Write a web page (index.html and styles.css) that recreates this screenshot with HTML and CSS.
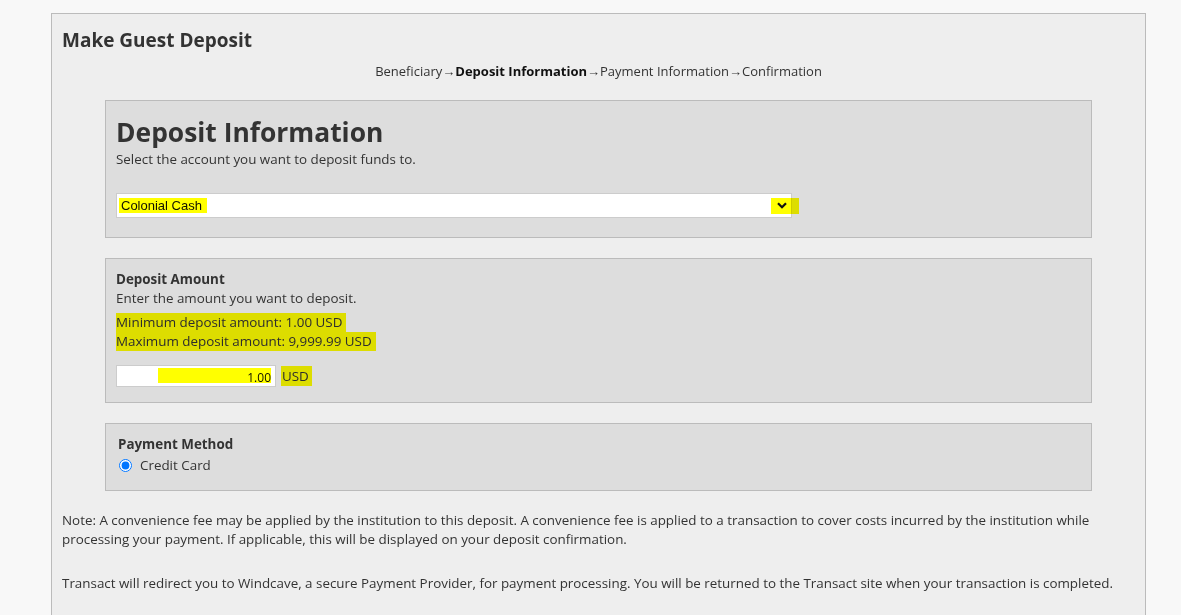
FILE: index.html
```html
<!DOCTYPE html>
<html lang="en">
<head>
  <meta charset="UTF-8" />
  <meta name="viewport" content="width=device-width, initial-scale=1.0" />
  <title>Make Guest Deposit</title>
  <link rel="stylesheet" href="styles.css">
</head>
<body>
  <div class="page">
    <h2 class="page-title">Make Guest Deposit</h2>
    <div class="steps">
      Beneficiary&rarr;<strong>Deposit Information</strong>&rarr;Payment Information&rarr;Confirmation
    </div>

    <div class="panel panel-account">
      <h1>Deposit Information</h1>
      <p>Select the account you want to deposit funds to.</p>
      <div class="select-wrap">
        <select class="account-select">
          <option>Colonial Cash</option>
        </select>
        <span class="mark mark-select"></span>
        <span class="mark mark-arrow"></span>
        <svg class="chevron" width="10" height="7" viewBox="0 0 10 7">
          <path d="M1 1.2 L5 5.2 L9 1.2" fill="none" stroke="#111" stroke-width="2.2" />
        </svg>
      </div>
    </div>

    <div class="panel panel-amount">
      <h3>Deposit Amount</h3>
      <p>Enter the amount you want to deposit.</p>
      <p class="limits first"><span class="hl">Minimum deposit amount: 1.00 USD</span></p>
      <p class="limits"><span class="hl">Maximum deposit amount: 9,999.99 USD</span></p>
      <div class="amount-row">
        <div class="amount-box">
          <span class="mark mark-input"></span>
          <input class="amount-input" type="text" value="1.00">
        </div>
        <span class="currency hl">USD</span>
      </div>
    </div>

    <div class="panel panel-method">
      <h3>Payment Method</h3>
      <label class="radio"><input type="radio" name="method" checked> Credit Card</label>
    </div>

    <p class="note">Note: A convenience fee may be applied by the institution to this deposit. A convenience fee is applied to a transaction to cover costs incurred by the institution while processing your payment. If applicable, this will be displayed on your deposit confirmation.</p>
    <p class="note">Transact will redirect you to Windcave, a secure Payment Provider, for payment processing. You will be returned to the Transact site when your transaction is completed.</p>
  </div>
</body>
</html>
```

FILE: styles.css
```css
* { box-sizing: border-box; }
body {
  margin: 0;
  background: #f8f8f8;
  font-family: "Open Sans", "Noto Sans", sans-serif;
  font-size: 13.4px;
  color: #333;
}
.page {
  width: 1095px;
  margin: 13px 0 0 51px;
  padding: 12px 10px 20px;
  background: #eeeeee;
  border: 1px solid #bbb;
  border-bottom: none;
  min-height: 620px;
}
.page-title {
  margin: 0;
  font-size: 19px;
  font-weight: 700;
  line-height: 28px;
}
.steps {
  text-align: center;
  font-size: 13px;
  line-height: 20px;
  margin: 7px 0 19px;
}
.steps strong { font-weight: 700; color: #111; }

.panel {
  margin: 0 43px 20px;
  background: #dddddd;
  border: 1px solid #bbb;
  padding: 11px 10px 19px;
}
.panel p { margin: 0; line-height: 19px; }
.panel h1 {
  margin: 0;
  font-size: 26.4px;
  font-weight: 700;
  line-height: 36px;
}
.panel h3 {
  margin: 0;
  font-size: 13.4px;
  font-weight: 700;
  line-height: 19px;
}
.panel-account { padding-top: 13px; padding-bottom: 19px; }
.panel-account p { margin-bottom: 24px; }

.select-wrap { position: relative; width: 676px; }
.account-select {
  appearance: none;
  display: block;
  width: 676px;
  height: 25px;
  padding: 0 4px;
  background: #fff;
  border: 1px solid #ccc;
  font-family: "Liberation Sans", Arial, sans-serif;
  font-size: 13px;
  color: #111;
}
.mark { position: absolute; pointer-events: none; mix-blend-mode: multiply; }
.mark-select { left: 3px; top: 5px; width: 88px; height: 15px; background: #ffff00; }
.mark-arrow { left: 655px; top: 5px; width: 28px; height: 16px; background: #ffff00; }
.chevron { position: absolute; left: 661px; top: 9px; }

.panel-amount { padding-bottom: 15px; }
.limits.first { margin-top: 5px; }
.hl { background: #ffff00; mix-blend-mode: multiply; padding: 0 4px 1px 0; }
.amount-row { display: flex; align-items: center; gap: 5px; margin-top: 14px; }
.amount-box { position: relative; }
.amount-input {
  display: block;
  width: 160px;
  height: 22px;
  border: 1px solid #ccc;
  background: #fff;
  text-align: right;
  padding: 3px 4px 0;
  font-family: "Open Sans", sans-serif;
  font-size: 12px;
  color: #111;
}
.mark-input { left: 42px; top: 3px; width: 113px; height: 15px; background: #ffff00; z-index: 1; }
.currency { padding: 1px 3px 1px 1px; }

.panel-method { padding: 11px 12px 14px; }
.radio { display: flex; align-items: center; gap: 5px; line-height: 22px; }
.radio input { margin: 0 3px 0 1px; width: 13px; height: 13px; }

.note {
  margin: 20px 0 0;
  line-height: 19px;
}
.note + .note { margin-top: 25px; }
```
